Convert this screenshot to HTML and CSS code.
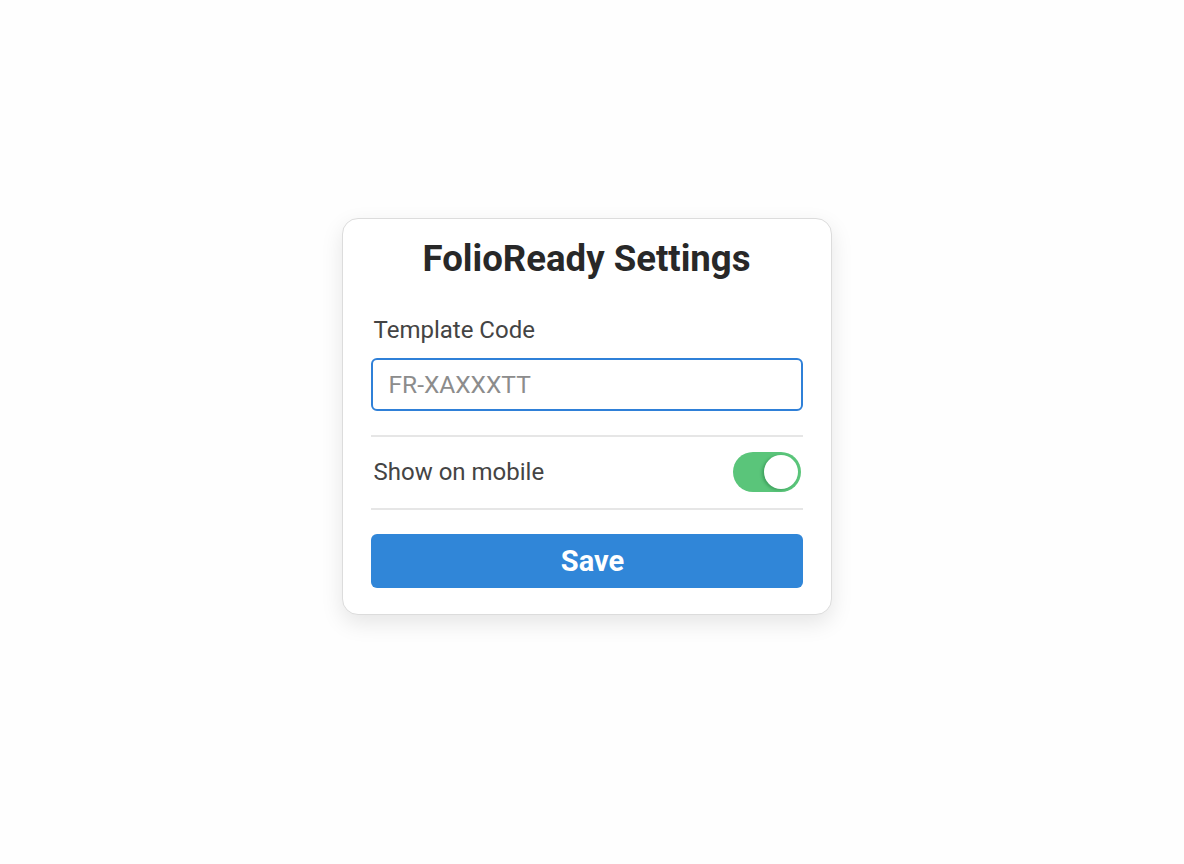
FILE: index.html
```html
<!doctype html>
<html lang="en">
  <head>
    <meta charset="UTF-8" />
    <meta name="viewport" content="width=device-width, initial-scale=1.0" />
    <title>FolioReady Settings</title>
    <link rel="stylesheet" href="styles.css">
  </head>
  <body>
    <div class="settings-card">
      <h1>FolioReady Settings</h1>

      <label class="field-label" for="templateCode">Template Code</label>
      <input id="templateCode" class="field-input" type="text" placeholder="FR-XAXXXTT" />

      <div class="toggle-row">
        <span>Show on mobile</span>
        <span class="switch on"><span class="knob"></span></span>
      </div>

      <button class="save-btn">Save</button>
    </div>
  </body>
</html>
```

FILE: styles.css
```css
body {
  margin: 0;
  height: 864px;
  display: flex;
  align-items: center;
  justify-content: center;
  background: #fefefe;
  font-family: Roboto, "Noto Sans", Arial, sans-serif;
}
.settings-card {
  width: 432px;
  margin: -32px 11px 0 0;
  padding: 18px 28px 26px;
  background: #fff;
  border: 1px solid #dcdcdc;
  border-radius: 16px;
  box-shadow: 0 8px 22px rgba(0, 0, 0, 0.1);
  display: flex;
  flex-direction: column;
}
.settings-card h1 {
  margin: 0 0 35px;
  text-align: center;
  font-size: 36.6px;
  line-height: 44px;
  font-weight: 700;
  color: #282828;
}
.field-label {
  font-size: 24px;
  line-height: 28px;
  color: #444;
  padding-left: 3px;
  margin-bottom: 14px;
}
.field-input {
  height: 53px;
  box-sizing: border-box;
  padding: 0 16px;
  border: 2px solid #2f80d8;
  border-radius: 6px;
  font-family: inherit;
  font-size: 24.5px;
  color: #333;
  outline: none;
  margin-bottom: 24px;
}
.field-input::placeholder {
  color: #8c8c8c;
}
.toggle-row {
  display: flex;
  align-items: center;
  justify-content: space-between;
  height: 71px;
  border-top: 2px solid #e6e6e6;
  border-bottom: 2px solid #e6e6e6;
  padding: 0 2px 0 3px;
  font-size: 24px;
  color: #444;
  margin-bottom: 24px;
}
.switch {
  width: 68px;
  height: 40px;
  border-radius: 20px;
  background: #e2e2e2;
  position: relative;
}
.switch.on {
  background: #5ac57a;
}
.knob {
  position: absolute;
  top: 3px;
  right: 3px;
  width: 34px;
  height: 34px;
  border-radius: 50%;
  background: #fff;
  box-shadow: -2px 1px 3px rgba(0, 80, 30, 0.3);
}
.save-btn {
  height: 54px;
  padding-left: 18px;
  border: none;
  border-radius: 6px;
  background: #3086d8;
  color: #fff;
  font-family: inherit;
  font-size: 29px;
  font-weight: 700;
  cursor: pointer;
}
```
